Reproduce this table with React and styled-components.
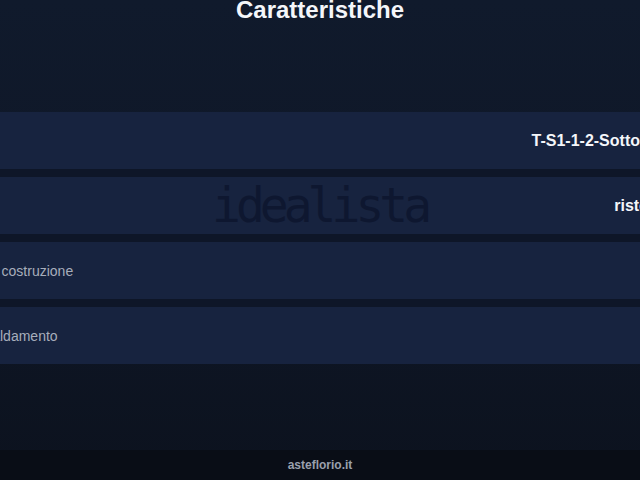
import React from 'react';
import styled, { createGlobalStyle } from 'styled-components';

const Global = createGlobalStyle`
  html, body {
    margin: 0;
    padding: 0;
    height: 100%;
    overflow: hidden;
    background: #0d1422;
  }
  #root {
    height: 100%;
  }
`;

const features = [
  { label: 'Lotto', value: 'T-S1-1-2-Sottostrada', strong: true },
  { label: 'Tipo', value: 'ristorante' },
  { label: 'Anno costruzione', value: '' },
  { label: 'Riscaldamento', value: '' },
];

export default () => {
  return (<Page>
    <Global />
    <Header>
      <Title>Caratteristiche</Title>
    </Header>
    <Sheet>
      {features.map((f) => (
        <Row key={f.label}>
          <Label $strong={f.strong}>{f.label}</Label>
          <Value>{f.value}</Value>
        </Row>
      ))}
      <Watermark>idealista</Watermark>
    </Sheet>
    <Spacer />
    <Footer>asteflorio.it</Footer>
  </Page>)
}

const Page = styled.div`
  height: 480px;
  display: flex;
  flex-direction: column;
  background: linear-gradient(180deg, #101a2c 0%, #0f1727 50%, #0c121e 100%);
  font-family: "Liberation Sans", Arial, sans-serif;
  overflow: hidden;
`;

const Header = styled.div`
  height: 112px;
  display: flex;
  justify-content: center;
  align-items: flex-start;
`;

const Title = styled.h1`
  margin: -2px 0 0;
  font-size: 24px;
  line-height: 24px;
  font-weight: 700;
  color: #f4f6fa;
`;

const Sheet = styled.div`
  position: relative;
  margin: 0 -60px;
  display: flex;
  flex-direction: column;
  gap: 8px;
  background: #0e1628;
`;

const Row = styled.div`
  height: 57px;
  display: flex;
  align-items: center;
  justify-content: space-between;
  padding: 0 12px 0 25px;
  background: #17233f;
`;

const Label = styled.span`
  font-size: 14px;
  color: ${(p) => (p.$strong ? '#dfe3ea' : '#a7aebb')};
`;

const Value = styled.span`
  font-size: 16px;
  font-weight: 700;
  color: #f4f6fa;
`;

const Watermark = styled.div`
  position: absolute;
  left: 272px;
  top: 69px;
  font-family: "DejaVu Sans Mono", monospace;
  font-size: 48px;
  line-height: 48px;
  letter-spacing: -5px;
  color: #0e1730;
  pointer-events: none;
`;

const Spacer = styled.div`
  flex: 1;
`;

const Footer = styled.div`
  height: 30px;
  display: flex;
  align-items: center;
  justify-content: center;
  background: #090d16;
  color: #9aa0ad;
  font-size: 12px;
  font-weight: 700;
`;
